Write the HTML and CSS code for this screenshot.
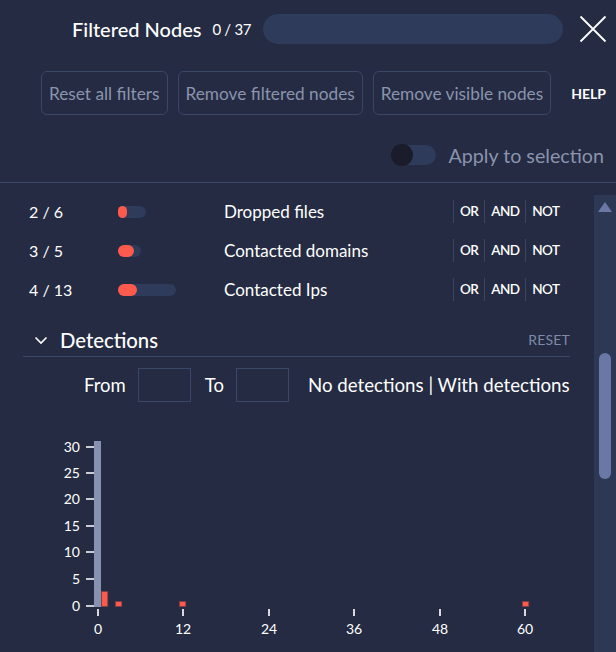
FILE: index.html
```html
<!DOCTYPE html>
<html>
<head>
<meta charset="utf-8">
<link rel="stylesheet" href="styles.css">
</head>
<body>
<div class="panel">
  <header class="header">
    <span class="title">Filtered Nodes</span>
    <span class="count">0 / 37</span>
    <div class="progress"></div>
    <svg class="close" width="28" height="28" viewBox="0 0 28 28"><path d="M1.5 1.5 L26.5 26.5 M26.5 1.5 L1.5 26.5" stroke="#ffffff" stroke-width="1.8" fill="none"/></svg>
  </header>
  <div class="toolbar">
    <button class="btn">Reset all filters</button>
    <button class="btn">Remove filtered nodes</button>
    <button class="btn">Remove visible nodes</button>
    <span class="help">HELP</span>
  </div>
  <div class="toggle-row">
    <div class="toggle"><div class="knob"></div></div>
    <span class="toggle-label">Apply to selection</span>
  </div>
  <div class="content">
    <div class="main">
      <div class="row">
        <span class="num">2 / 6</span>
        <div class="barcell"><div class="mini" style="width:28px"><div class="fill" style="width:9px"></div></div></div>
        <span class="label">Dropped files</span>
        <div class="ops"><span class="op">OR</span><span class="op">AND</span><span class="op">NOT</span></div>
      </div>
      <div class="row">
        <span class="num">3 / 5</span>
        <div class="barcell"><div class="mini" style="width:23px"><div class="fill" style="width:16px"></div></div></div>
        <span class="label">Contacted domains</span>
        <div class="ops"><span class="op">OR</span><span class="op">AND</span><span class="op">NOT</span></div>
      </div>
      <div class="row">
        <span class="num">4 / 13</span>
        <div class="barcell"><div class="mini" style="width:58px"><div class="fill" style="width:19px"></div></div></div>
        <span class="label">Contacted Ips</span>
        <div class="ops"><span class="op">OR</span><span class="op">AND</span><span class="op">NOT</span></div>
      </div>
      <div class="section-head">
        <svg class="chev" width="14" height="10" viewBox="0 0 14 10"><path d="M1.5 2.5 L7 8 L12.5 2.5" stroke="#ffffff" stroke-width="1.6" fill="none"/></svg>
        <span class="section-title">Detections</span>
        <span class="reset">RESET</span>
      </div>
      <div class="range">
        <span class="rl">From</span>
        <div class="inp"></div>
        <span class="rl to">To</span>
        <div class="inp"></div>
        <span class="det">No detections | With detections</span>
      </div>
      <svg class="chart" width="594" height="242" viewBox="0 0 594 242">
        <g fill="#ffffff" font-family="Lato, sans-serif" font-size="14" text-anchor="end">
          <text x="80" y="42">30</text>
          <text x="80" y="68">25</text>
          <text x="80" y="94">20</text>
          <text x="80" y="121">15</text>
          <text x="80" y="147">10</text>
          <text x="80" y="174">5</text>
          <text x="80" y="201">0</text>
        </g>
        <g stroke="#c9ccd4" stroke-width="2">
          <line x1="86" y1="37" x2="94" y2="37"/>
          <line x1="86" y1="63" x2="94" y2="63"/>
          <line x1="86" y1="89" x2="94" y2="89"/>
          <line x1="86" y1="116" x2="94" y2="116"/>
          <line x1="86" y1="142" x2="94" y2="142"/>
          <line x1="86" y1="169" x2="94" y2="169"/>
          <line x1="86" y1="196" x2="94" y2="196"/>
        </g>
        <rect x="94" y="31" width="7" height="166" fill="#8792b0"/>
        <g fill="#fd5a4e" stroke="#7a3b44" stroke-width="0.8">
          <rect x="101.4" y="181.4" width="6.4" height="15.2"/>
          <rect x="115.4" y="191.4" width="6.4" height="5.2"/>
          <rect x="179.4" y="191.4" width="6.4" height="5.2"/>
          <rect x="522.4" y="191.4" width="6.4" height="5.2"/>
        </g>
        <g stroke="#d7d9de" stroke-width="2">
          <line x1="98" y1="199" x2="98" y2="206"/>
          <line x1="183" y1="199" x2="183" y2="206"/>
          <line x1="269" y1="199" x2="269" y2="206"/>
          <line x1="354" y1="199" x2="354" y2="206"/>
          <line x1="440" y1="199" x2="440" y2="206"/>
          <line x1="525" y1="199" x2="525" y2="206"/>
        </g>
        <g fill="#ffffff" font-family="Lato, sans-serif" font-size="14" text-anchor="middle">
          <text x="98" y="224">0</text>
          <text x="183" y="224">12</text>
          <text x="269" y="224">24</text>
          <text x="354" y="224">36</text>
          <text x="440" y="224">48</text>
          <text x="525" y="224">60</text>
        </g>
      </svg>
    </div>
    <div class="scrollbar">
      <svg class="arrow" width="16" height="12" viewBox="0 0 16 12"><path d="M8 1 L15 11 L1 11 Z" fill="#6b78a5"/></svg>
      <div class="thumb"></div>
    </div>
  </div>
</div>
</body>
</html>
```
FILE: styles.css
```css
* { box-sizing: border-box; }
html, body {
  margin: 0;
  padding: 0;
  background: #242b42;
}
body {
  width: 616px;
  height: 652px;
  overflow: hidden;
  font-family: Lato, "Noto Sans", sans-serif;
  color: #ffffff;
}
.panel {
  width: 616px;
  height: 652px;
  display: flex;
  flex-direction: column;
}
.header {
  height: 58px;
  display: flex;
  align-items: center;
  padding-left: 72px;
}
.title {
  font-size: 20px;
  font-weight: 500;
}
.count {
  font-size: 15px;
  margin-left: 11px;
  letter-spacing: -0.3px;
}
.progress {
  width: 300px;
  height: 30px;
  border-radius: 15px;
  background: #2e3b5a;
  margin-left: 12px;
}
.close {
  margin-left: 16px;
}
.toolbar {
  margin-top: 13px;
  display: flex;
  align-items: center;
  padding-left: 41px;
  gap: 10px;
}
.btn {
  height: 44px;
  padding: 0 7px;
  background: transparent;
  border: 1px solid #3a4766;
  border-radius: 6px;
  color: #8a94ad;
  font-family: Lato, "Noto Sans", sans-serif;
  font-size: 17.25px;
}
.help {
  margin-left: 10px;
  font-size: 14px;
  font-weight: 700;
}
.toggle-row {
  margin-top: 29px;
  height: 22px;
  display: flex;
  align-items: center;
  justify-content: flex-end;
  padding-right: 12px;
}
.toggle {
  width: 45px;
  height: 20px;
  border-radius: 10px;
  background: #2e3b5a;
  position: relative;
}
.knob {
  position: absolute;
  left: 0;
  top: -1px;
  width: 22px;
  height: 22px;
  border-radius: 50%;
  background: #1a1b2b;
}
.toggle-label {
  margin-left: 12px;
  font-size: 19.7px;
  color: #8a94ad;
}
.content {
  margin-top: 16px;
  border-top: 1px solid #3a4766;
  flex: 1;
  display: flex;
}
.main {
  width: 594px;
  padding-top: 9px;
}
.row {
  height: 39px;
  display: flex;
  align-items: center;
  padding-left: 29px;
}
.num {
  width: 89px;
  font-size: 16px;
}
.barcell {
  width: 106px;
}
.mini {
  height: 12px;
  border-radius: 6px;
  background: #2e3b5a;
  display: flex;
  align-items: center;
}
.fill {
  height: 12px;
  border-radius: 6px;
  background: #fd5a4e;
}
.label {
  width: 229px;
  font-size: 17px;
}
.ops {
  display: flex;
  align-items: center;
}
.op {
  border-left: 1px solid #3b4560;
  height: 23px;
  line-height: 23px;
  padding: 0 6px;
  font-size: 13.5px;
  font-weight: 600;
  letter-spacing: -0.6px;
}
.section-head {
  margin-top: 14px;
  margin-left: 23px;
  width: 547px;
  height: 34px;
  border-bottom: 1px solid #3a4766;
  display: flex;
  align-items: center;
  padding-left: 11px;
}
.chev {
  margin-right: 12px;
}
.section-title {
  font-size: 20.3px;
  font-weight: 500;
}
.reset {
  margin-left: auto;
  font-size: 14px;
  color: #7f8aa8;
  letter-spacing: 0.2px;
}
.range {
  margin-top: 11px;
  height: 34px;
  display: flex;
  align-items: center;
  padding-left: 84px;
}
.rl {
  font-size: 18.5px;
  margin-right: 12px;
}
.to {
  margin-left: 14px;
}
.inp {
  width: 53px;
  height: 34px;
  border: 1px solid #3a4766;
}
.det {
  margin-left: 19px;
  font-size: 18.7px;
}
.chart {
  display: block;
  margin-top: 8px;
}
.scrollbar {
  margin-top: 12px;
  width: 22px;
  background: #2d3854;
  display: flex;
  flex-direction: column;
  align-items: center;
}
.arrow {
  margin-top: 6px;
}
.thumb {
  margin-top: 140px;
  width: 12px;
  height: 126px;
  border-radius: 6px;
  background: #6a78a6;
}
```
